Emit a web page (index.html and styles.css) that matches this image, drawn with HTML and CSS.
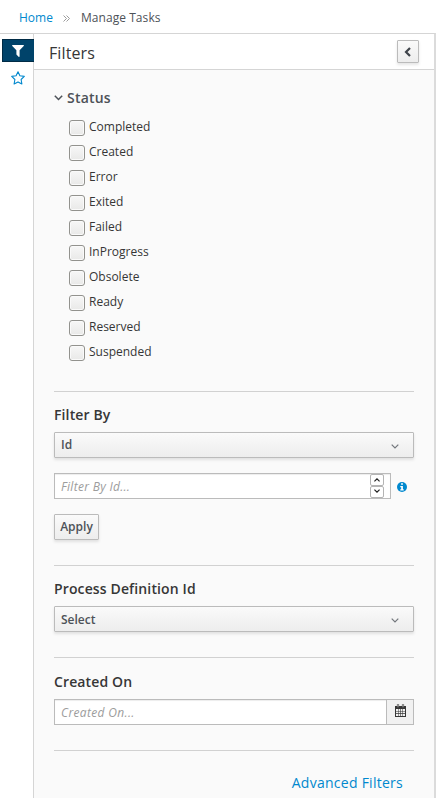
FILE: index.html
```html
<!DOCTYPE html>
<html lang="en">
<head>
<meta charset="utf-8">
<title>Manage Tasks</title>
<link rel="stylesheet" href="styles.css">
</head>
<body>
<nav class="breadcrumb">
  <a class="link" href="#">Home</a>
  <svg class="crumb-sep" width="7" height="7" viewBox="0 0 7 7"><path d="M.5.5l3 3-3 3M3.5.5l3 3-3 3"/></svg>
  <span>Manage Tasks</span>
</nav>
<div class="workspace">
  <aside class="rail">
    <button class="rail-tab active" aria-label="Filters"><svg width="12" height="12" viewBox="0 0 12 12"><path fill="#fff" d="M.6 0h10.8q.9.3.3 1L7.6 5.2v6.3q-.3.7-1 .2L4.400 9.600V5.200L.3 1Q-.3.3.6 0z"/></svg></button>
    <button class="rail-tab" aria-label="Saved filters"><svg width="14" height="14" viewBox="0 0 14 14"><path fill="none" stroke="#0088ce" stroke-width="1.100" stroke-linejoin="round" d="M7 .8l1.900 4 4.400.6-3.200 3.100.8 4.500L7 10.900 3.100 13l.8-4.500L.7 5.400l4.400-.6z"/></svg></button>
  </aside>
  <main class="panel">
    <header class="panel-head">
      <h1>Filters</h1>
      <button class="btn collapse" aria-label="Collapse"><svg width="8" height="10" viewBox="0 0 8 10"><path fill="none" stroke="#3f444b" stroke-width="2.200" d="M6 .9L2 5l4 4.100"/></svg></button>
    </header>
    <div class="panel-body">
      <section class="status">
        <h2 class="status-title"><svg width="9" height="6" viewBox="0 0 9 6"><path fill="none" stroke="#4d5258" stroke-width="1.500" d="M.8.8l3.700 3.700L8.200.8"/></svg>Status</h2>
        <ul class="checks">
          <li><label><input type="checkbox"><span>Completed</span></label></li>
          <li><label><input type="checkbox"><span>Created</span></label></li>
          <li><label><input type="checkbox"><span>Error</span></label></li>
          <li><label><input type="checkbox"><span>Exited</span></label></li>
          <li><label><input type="checkbox"><span>Failed</span></label></li>
          <li><label><input type="checkbox"><span>InProgress</span></label></li>
          <li><label><input type="checkbox"><span>Obsolete</span></label></li>
          <li><label><input type="checkbox"><span>Ready</span></label></li>
          <li><label><input type="checkbox"><span>Reserved</span></label></li>
          <li><label><input type="checkbox"><span>Suspended</span></label></li>
        </ul>
      </section>
      <section class="group filter-by">
        <h3>Filter By</h3>
        <button class="btn select"><span>Id</span><svg width="8" height="5" viewBox="0 0 8 5"><path d="M.7.700L4 4 7.300.700"/></svg></button>
        <div class="number-row">
          <div class="field number">
            <input class="entry" type="text" placeholder="Filter By Id...">
            <div class="spinner">
              <button aria-label="Increase"><svg width="6" height="4" viewBox="0 0 6 4"><path d="M.4 3.400L3 .9l2.600 2.500"/></svg></button>
              <button aria-label="Decrease"><svg width="6" height="4" viewBox="0 0 6 4"><path d="M.4.600L3 3.100 5.600.600"/></svg></button>
            </div>
          </div>
          <svg class="info" width="10" height="10" viewBox="0 0 10 10"><circle cx="5" cy="5" r="5" fill="#0088ce"/><path fill="#fff" d="M4.100 1.200h1.800v1.600H4.100zM3.300 4h2.600v3.200h.8v1.300H3.300V7.200h.9V5.200h-.9z"/></svg>
        </div>
        <button class="btn apply">Apply</button>
      </section>
      <section class="group process">
        <h3>Process Definition Id</h3>
        <button class="btn select"><span>Select</span><svg width="8" height="5" viewBox="0 0 8 5"><path d="M.7.700L4 4 7.300.700"/></svg></button>
      </section>
      <section class="group created">
        <h3>Created On</h3>
        <div class="field date">
          <input class="entry" type="text" placeholder="Created On...">
          <button class="calendar" aria-label="Open calendar"><svg width="11" height="13" viewBox="0 0 11 13"><path fill="#363636" d="M0 2h11v11H0z"/><path fill="#f1f1f1" d="M1 5h2v2H1zM3.500 5h1.700v2H3.500zM5.800 5h1.700v2H5.800zM8 5h2v2H8zM1 7.600h2v1.700H1zM3.500 7.600h1.700v1.700H3.500zM5.800 7.600h1.700v1.700H5.800zM8 7.600h2v1.700H8zM1 10h2v2H1zM3.500 10h1.700v2H3.500zM5.800 10h1.700v2H5.800zM8 10h2v2H8z"/><path fill="#aaa" stroke="#444" stroke-width=".5" d="M2.300.300h1.400v3H2.300zM7.300.300h1.400v3H7.300z"/></svg></button>
        </div>
      </section>
      <footer class="group more"><a class="link" href="#">Advanced Filters</a></footer>
    </div>
  </main>
</div>
</body>
</html>
```

FILE: styles.css
```css
* { box-sizing: border-box; }
body {
  margin: 0;
  height: 798px;
  overflow: hidden;
  background: #fff;
  color: #363636;
  font: 12px/20px "Open Sans", sans-serif;
}
h1, h2, h3, ul { margin: 0; padding: 0; }
button, input { font: inherit; margin: 0; }
svg { display: block; flex: none; }
.link { color: #0088ce; text-decoration: none; }
.breadcrumb {
  display: flex;
  align-items: center;
  height: 33px;
  padding: 2px 0 0 19px;
  color: #4d5258;
}
.breadcrumb span { letter-spacing: .06px; }
.crumb-sep { margin: 1px 11px 0 10px; fill: none; stroke: #9c9c9c; }
.workspace { display: flex; height: 765px; }
.rail {
  width: 33px;
  padding: 5px 0 0 2px;
  border-top: 1px solid #d1d1d1;
}
.rail-tab {
  display: flex;
  align-items: center;
  justify-content: center;
  width: 32px;
  height: 23px;
  padding: 0;
  border: 0;
  background: none;
}
.rail-tab + .rail-tab { margin-top: 4px; }
.rail-tab.active {
  position: relative;
  padding-right: 1px;
  border: 1px solid #002b45;
  border-right: 0;
  background: #00436a;
}
.panel {
  flex: 1;
  border: 1px solid #d5d5d5;
  border-width: 1px 2px 0 1px;
  border-right-color: #dbdbdb;
  background: #fafafa;
}
.panel-head {
  display: flex;
  align-items: center;
  justify-content: space-between;
  height: 36px;
  padding: 0 15px;
  border-bottom: 1px solid #d5d5d5;
  background: #fff;
}
.panel-head h1 { font-size: 16px; font-weight: 400; padding-top: 3px; letter-spacing: .1px; }
.btn {
  border: 1px solid #bbb;
  border-radius: 1px;
  background: linear-gradient(#fafafa, #ededed);
  box-shadow: 0 2px 3px rgba(3, 3, 3, .1);
  color: #4d5258;
  font-weight: 600;
  line-height: 20px;
}
.collapse {
  display: flex;
  align-items: center;
  justify-content: center;
  width: 22px;
  height: 23px;
  padding: 0;
}
.panel-body { padding: 0 20px; }
.status { height: 321px; padding-top: 18px; }
.status-title {
  display: flex;
  align-items: center;
  gap: 4px;
  height: 20px;
  color: #4d5258;
  font-size: 14px;
  font-weight: 600;
  letter-spacing: .2px;
}
.checks { list-style: none; padding: 9px 0 0 15px; }
.checks li { height: 25px; }
.checks label { display: flex; gap: 4px; }
.checks input {
  appearance: none;
  width: 16px;
  height: 16px;
  margin-top: 3px;
  border: 1px solid #92928e;
  border-radius: 3px;
  background: linear-gradient(#f7f7f7, #e9e9e8);
  box-shadow: inset 0 0 0 1px #fafafa;
}
.group { border-top: 1px solid #d1d1d1; padding-top: 13px; }
.group h3 { font-size: 14px; line-height: 20px; font-weight: 600; letter-spacing: .13px; }
.select {
  display: flex;
  align-items: center;
  justify-content: space-between;
  width: 100%;
  height: 26px;
  margin-top: 7px;
  padding: 0 14px 0 6px;
}
.select svg { fill: none; stroke: #72767b; stroke-width: 1.2; margin-top: 2px; }
.filter-by { height: 174px; }
.number-row { display: flex; align-items: center; gap: 6px; margin: 15px 0; }
.info { margin-top: 2px; }
.field {
  display: flex;
  height: 26px;
  border: 1px solid #bbb;
  background: #fff;
  box-shadow: inset 0 1px 1px rgba(3, 3, 3, .075);
}
.number { width: 337px; padding-right: 6px; }
.entry {
  flex: 1;
  min-width: 0;
  border: 0;
  outline: 0;
  padding: 2px 6px 0;
  background: none;
  color: #363636;
}
.entry::placeholder { color: #9c9c9c; font-style: italic; letter-spacing: .3px; opacity: 1; }
.date .entry::placeholder { letter-spacing: .35px; }
.spinner { display: flex; flex-direction: column; width: 14px; }
.spinner button {
  display: flex;
  align-items: center;
  justify-content: center;
  height: 12px;
  padding: 0;
  border: 1px solid #b4b4b4;
  border-radius: 2px;
  background: #fff;
}
.spinner button + button { padding-bottom: 2px; }
.spinner svg { fill: none; stroke: #222; stroke-width: 1.3; }
.apply { display: block; width: 45px; height: 26px; padding: 0; }
.process { height: 92px; }
.process .select span { padding-top: 2px; }
.created { height: 93px; padding-top: 14px; }
.date { margin-top: 7px; }
.calendar {
  display: flex;
  justify-content: center;
  width: 27px;
  padding: 4px 0 0;
  border: 0;
  border-left: 1px solid #bbb;
  background: #f1f1f1;
}
.more { padding: 22px 11px 0 0; text-align: right; font-size: 14px; letter-spacing: .26px; }
```
